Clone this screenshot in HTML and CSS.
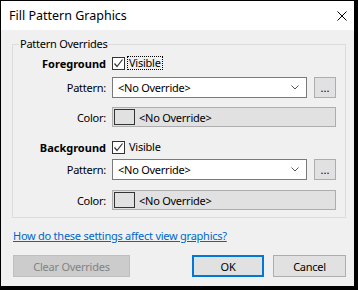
FILE: index.html
```html
<!DOCTYPE html>
<html lang="en">
<head>
  <meta charset="UTF-8" />
  <title>Fill Pattern Graphics</title>
  <link rel="stylesheet" href="styles.css">
</head>
<body>
  <div class="window">
    <div class="titlebar">
      <span class="title">Fill Pattern Graphics</span>
      <svg class="close" width="10" height="10" viewBox="0 0 10 10">
        <path d="M0.5 0.5 L9.5 9.5 M9.5 0.5 L0.5 9.5" stroke="#000" stroke-width="1" fill="none"/>
      </svg>
    </div>

    <div class="content">
      <fieldset class="group">
        <legend>Pattern Overrides</legend>

        <!-- Foreground -->
        <div class="row head">
          <div class="label bold">Foreground</div>
          <span class="checkbox">
            <svg width="11" height="11" viewBox="0 0 11 11"><path d="M1.5 5.5 L4 8.5 L9.5 1.5" stroke="#333" stroke-width="1.2" fill="none"/></svg>
          </span>
          <span class="check-label focused">Visible</span>
        </div>

        <div class="row pattern">
          <div class="label">Pattern:</div>
          <div class="select">
            <span>&lt;No Override&gt;</span>
            <svg width="8" height="5" viewBox="0 0 8 5"><path d="M0.5 0.5 L4 4 L7.5 0.5" stroke="#555" fill="none"/></svg>
          </div>
          <button class="dots">...</button>
        </div>

        <div class="row color">
          <div class="label">Color:</div>
          <div class="color-box">
            <span class="swatch"></span>
            <span>&lt;No Override&gt;</span>
          </div>
        </div>

        <!-- Background -->
        <div class="row head bg">
          <div class="label bold">Background</div>
          <span class="checkbox">
            <svg width="11" height="11" viewBox="0 0 11 11"><path d="M1.5 5.5 L4 8.5 L9.5 1.5" stroke="#333" stroke-width="1.2" fill="none"/></svg>
          </span>
          <span class="check-label">Visible</span>
        </div>

        <div class="row pattern bg-pattern">
          <div class="label">Pattern:</div>
          <div class="select">
            <span>&lt;No Override&gt;</span>
            <svg width="8" height="5" viewBox="0 0 8 5"><path d="M0.5 0.5 L4 4 L7.5 0.5" stroke="#555" fill="none"/></svg>
          </div>
          <button class="dots">...</button>
        </div>

        <div class="row color">
          <div class="label">Color:</div>
          <div class="color-box">
            <span class="swatch"></span>
            <span>&lt;No Override&gt;</span>
          </div>
        </div>
      </fieldset>

      <a class="help" href="#">How do these settings affect view graphics?</a>

      <div class="buttons">
        <button class="btn clear" disabled>Clear Overrides</button>
        <div class="right-buttons">
          <button class="btn ok">OK</button>
          <button class="btn">Cancel</button>
        </div>
      </div>
    </div>
  </div>
</body>
</html>
```

FILE: styles.css
```css
body {
  margin: 0;
  padding: 0;
  font-family: 'Noto Sans', sans-serif;
  font-size: 11px;
  letter-spacing: -0.25px;
  color: #000;
  background: #000;
}

.window {
  width: 358px;
  height: 290px;
  box-sizing: border-box;
  border-top: 1px solid #000;
  border-left: 1px solid #000;
  border-right: 4px solid #000;
  border-bottom: 4px solid #000;
  background: #f0f0f0;
  display: flex;
  flex-direction: column;
}

.titlebar {
  height: 29px;
  background: #fff;
  display: flex;
  align-items: center;
  justify-content: space-between;
  padding: 0 7px 0 8px;
  flex-shrink: 0;
}

.title {
  font-size: 12.5px;
  letter-spacing: 0;
  margin-top: -1px;
}

.content {
  flex: 1;
  display: flex;
  flex-direction: column;
  padding: 0 8px 0 11px;
}

.group {
  margin: 6px 0 0 0;
  padding: 2px 0 7px 0;
  border: 1px solid #dcdcdc;
  min-width: 0;
}

.group legend {
  margin-left: 6px;
  padding: 0 1px;
  line-height: 16px;
}

.row {
  display: flex;
  align-items: center;
}

.label {
  width: 93px;
  margin-right: 6px;
  text-align: right;
  flex-shrink: 0;
}

.bold {
  font-weight: bold;
  letter-spacing: 0;
}

.head {
  height: 18px;
}

.pattern {
  height: 21px;
  margin-top: 5px;
}

.color {
  height: 20px;
  margin-top: 9px;
}

.head.bg {
  margin-top: 11px;
}

.bg-pattern {
  margin-top: 3px;
}

.bg-pattern + .color {
  margin-top: 10px;
}

.checkbox {
  width: 11px;
  height: 11px;
  border: 1px solid #333;
  background: #fff;
  display: flex;
}

.check-label {
  margin-left: 2px;
  padding: 0 1px;
  border: 1px dotted transparent;
  line-height: 12px;
}

.check-label.focused {
  border-color: #000;
}

.select {
  width: 195px;
  height: 21px;
  box-sizing: border-box;
  border: 1px solid #7a7a7a;
  background: #fff;
  display: flex;
  align-items: center;
  justify-content: space-between;
  padding: 0 7px 0 5px;
}

.dots {
  width: 22px;
  height: 21px;
  margin-left: 7px;
  box-sizing: border-box;
  border: 1px solid #adadad;
  background: #e1e1e1;
  font-family: 'Noto Sans', sans-serif;
  font-size: 11px;
  padding: 0;
  color: #000;
}

.color-box {
  width: 224px;
  height: 20px;
  box-sizing: border-box;
  border: 1px solid #adadad;
  background: #e1e1e1;
  display: flex;
  align-items: center;
  padding-left: 1px;
  gap: 4px;
}

.swatch {
  width: 19px;
  height: 14px;
  border: 1px solid #333;
  background: #e1e1e1;
}

.help {
  margin-top: 10px;
  margin-left: 1px;
  color: #0066cc;
  line-height: 16px;
  align-self: flex-start;
}

.buttons {
  margin-top: 11px;
  display: flex;
  justify-content: space-between;
}

.right-buttons {
  display: flex;
  gap: 9px;
}

.btn {
  height: 22px;
  box-sizing: border-box;
  border: 1px solid #adadad;
  background: #e1e1e1;
  font-family: 'Noto Sans', sans-serif;
  font-size: 11px;
  letter-spacing: -0.25px;
  color: #000;
  width: 73px;
  padding: 0;
}

.btn.clear {
  margin-left: 1px;
  width: 117px;
  background: #cccccc;
  border-color: #bfbfbf;
  color: #838383;
}

.btn.ok {
  width: 72px;
  border: 2px solid #0078d7;
}
```
